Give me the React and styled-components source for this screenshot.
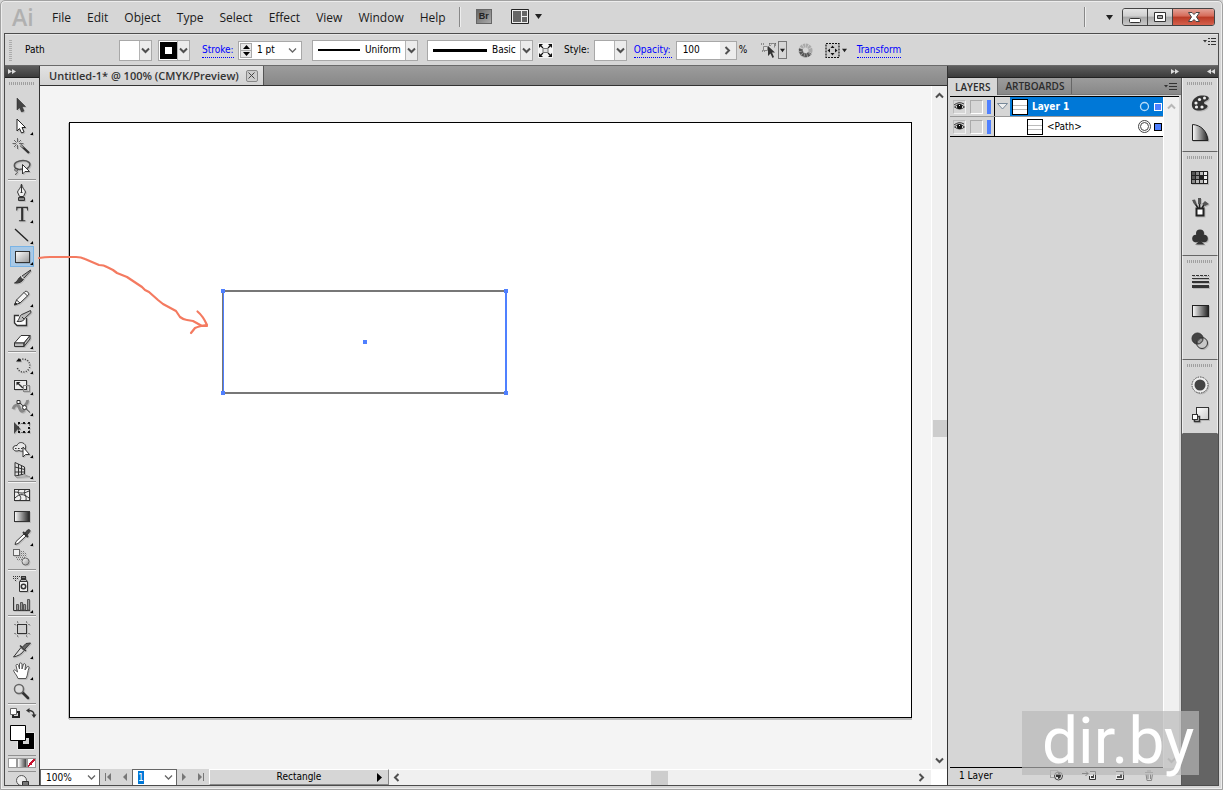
import React, { useState } from 'react'
import styled, { createGlobalStyle } from 'styled-components'

const GlobalStyle = createGlobalStyle`
  * {
    box-sizing: border-box;
  }
  body {
    margin: 0;
    overflow: hidden;
    background: #d6d6d6;
  }
  body, button, input, select {
    font-family: 'DejaVu Sans Condensed', 'Open Sans', sans-serif;
    font-size: 10px;
    line-height: 14px;
    color: #000;
  }
  button {
    padding: 0;
    border: 0;
    background: none;
  }
  svg {
    display: block;
    flex: none;
    overflow: visible;
  }
`

const menus = ['File', 'Edit', 'Object', 'Type', 'Select', 'Effect', 'View', 'Window', 'Help']

const dark = { fill: 'none', stroke: '#333', strokeWidth: 1 }

const toolIcons = {
  selection: <path d='M5 3V15L7.5 12.5L9.5 17L12 16L10 11.5H13.5Z' fill='#444' stroke='#222' strokeWidth='.5' />,
  direct: <path d='M5 3V15L7.5 12.5L9.5 17L12 16L10 11.5H13.5Z' fill='#fff' stroke='#222' />,
  wand: (
    <g {...dark}>
      <path d='M5.5 1V5M5.5 8V12M.5 6.5H4M7 6.5H11.5M2 3L4.5 5.5M9 3L7 5M2 10L4.5 7.5' stroke='#666' />
      <path d='M8.5 8L17 16' strokeWidth='2.4' />
      <path d='M8.5 8L11 10.5' stroke='#fff' />
    </g>
  ),
  lasso: (
    <g {...dark}>
      <path
        d='M10 11C7 12 3 11 2.5 8.500C1.500 5 6 2.500 11 2.500C16 2.500 19 5 17.500 8C17 9 16 10 15 10.500'
        strokeWidth='1.5'
        stroke='#555'
      />
      <path d='M4 10.500C2 11 2.500 13.500 4.500 13C7 12.500 6 10 4 10.500M5 13.500C6 15 4.500 16 3 16.500' stroke='#444' />
      <path d='M10.5 6.5V16L13 13.5H17.5Z' fill='#fff' />
    </g>
  ),
  pen: (
    <g {...dark}>
      <path d='M9.5 1C10 5 13 7 13.5 9L11.5 13.5H7.5L5.5 9C6 7 9 5 9.5 1Z' fill='#eee' />
      <path d='M9.5 2V9M8.5 9.5H10.5' />
      <path d='M6.5 14.5H12.5V17.5H6.5Z' fill='#888' />
    </g>
  ),
  type: (
    <text x='4' y='17' fontFamily='Liberation Serif' fontSize='20' fill='#333' stroke='#333' strokeWidth='.3'>
      T
    </text>
  ),
  line: <path d='M3 4L16 16' stroke='#222' strokeWidth='1.3' />,
  rect: <rect x='3.5' y='5.5' width='14' height='11' fill='url(#shine)' stroke='#333' />,
  brush: (
    <g {...dark}>
      <path d='M18.5 3L10 9L12 11L18.5 4Z' fill='#aaa' />
      <path d='M9 9.500L11.500 12C10 15 7 16.500 2.500 16C5.500 15 6 11 9 9.500Z' fill='#444' />
      <path d='M9.5 9.5L11.5 11.5' stroke='#eee' strokeWidth='1.5' />
    </g>
  ),
  pencil: (
    <g {...dark}>
      <path d='M2.5 17L4.5 12L13 3.5C15 2.5 17.5 5 16.5 7L8 15Z' fill='#f5f5f5' />
      <path d='M12 4.5L15.5 8M4.5 12L8 15' />
      <path d='M2.5 17L3.5 14.5L5 16Z' fill='#111' />
    </g>
  ),
  blob: (
    <g {...dark}>
      <path d='M7 6.5H2.5V14L5 16.5H14.5V9' fill='#fff' strokeWidth='1.4' />
      <path d='M18.5 1.5L11 5C7 6 8 10 5 12.500C9 13 12 12 13 9L19 3.500Z' fill='#bbb' />
      <path d='M10 8L12 10' />
    </g>
  ),
  eraser: (
    <g {...dark} strokeLinejoin='round'>
      <path d='M9 5.5H18L12 13H2.5Z' fill='#fff' />
      <path d='M2.5 13H12V16.5H2.5ZM12 13L18 5.5V9L12 16.5Z' fill='#bbb' />
    </g>
  ),
  rotate: (
    <g {...dark}>
      <path d='M8 5A6.500 6.500 0 1 1 5 12' strokeDasharray='1 1.5' strokeWidth='1.5' />
      <path d='M4 6.5L7 3L9.5 6.5Z' fill='#111' stroke='none' />
    </g>
  ),
  scale: (
    <g {...dark}>
      <rect x='2.5' y='4.5' width='12' height='9' fill='#eee' />
      <path d='M5 6.5L11 12' strokeWidth='1.5' />
      <path d='M4.5 6H8.5L4.5 9.5Z' fill='#222' stroke='none' />
      <rect x='11.5' y='9.5' width='6' height='6' stroke='#888' />
    </g>
  ),
  warp: (
    <g {...dark}>
      <path d='M1 12C3 7 6 7 7.500 11C9 15.500 12 15 12 11C12 7 16 8 15.500 3' strokeWidth='3' stroke='#888' />
      <path d='M6.5 4.5L18 15.5' />
      <path d='M5 3.5H8V6.5H5Z' fill='#fff' />
      <circle cx='12.5' cy='10.5' r='2' fill='#fff' />
    </g>
  ),
  transform: (
    <g {...dark}>
      <path d='M2 4V16L5.5 11.5H9Z' fill='#444' stroke='none' />
      <rect x='6.5' y='5.5' width='11' height='9' strokeDasharray='1 2' stroke='#111' />
      <path
        d='M6 4H8V6H6ZM11 4H13V6H11ZM16 4H18V6H16ZM16 9H18V11H16ZM6 13H8V15H6ZM11 13H13V15H11ZM16 13H18V15H16Z'
        fill='#111'
        stroke='none'
      />
    </g>
  ),
  builder: (
    <g {...dark}>
      <path d='M7 11.5C0 14 -1 6 5 6.5C7 1 15 4 13.5 9C13 12 10 13 7 11.5Z' fill='#e8e8e8' />
      <path d='M3 9.500H11' strokeDasharray='1.5 1.5' />
      <path d='M11 8V18L13.5 15.5H17.5Z' fill='#fff' />
    </g>
  ),
  perspective: (
    <g {...dark}>
      <path d='M3 2.5L12.5 7V14L3 16Z' fill='#ddd' />
      <path d='M6.500 4V15.500M9.500 5.500V15M3 7L12.500 9.500M3 12H12.500' />
      <path d='M4 17.5L18 16.500M11 14L18 17' stroke='#999' />
    </g>
  ),
  mesh: (
    <g {...dark}>
      <rect x='2.5' y='4.5' width='15' height='11' fill='#eee' />
      <path d='M3 7C8 7 9 10 17 6M3 13C8 8 12 9 17 13M7 5C4 9 11 11 8 15M13 5C11 9 15 11 14 15' />
    </g>
  ),
  gradient: <rect x='2.5' y='5.5' width='15' height='10' fill='url(#ramp)' stroke='#333' />,
  eyedropper: (
    <g {...dark}>
      <path d='M12 7L4 14.5L3 17.5L6 16.5L14 9Z' fill='#fff' />
      <path d='M11 5L16 10' strokeWidth='2' />
      <path d='M13 6L15.500 3C17 1.500 19 3.500 17.500 5L15 8Z' fill='#444' />
    </g>
  ),
  blend: (
    <g {...dark}>
      <rect x='1.5' y='1.5' width='6' height='6' fill='#eee' stroke='#666' />
      <path d='M9 3.5H12M9 5.5H14M9 7.5H15M4 9.5H13M5 11.5H10' strokeDasharray='1 1' stroke='#777' />
      <circle cx='13.5' cy='13.5' r='3.5' fill='url(#shine)' stroke='#666' />
    </g>
  ),
  spray: (
    <g {...dark}>
      <path d='M1 3.5H8M1 5.5H7M3 7.5H5' strokeDasharray='1 1' strokeWidth='1.2' />
      <path d='M7.5 8.5H15.5V18.5H7.5Z' fill='#eee' />
      <rect x='9.5' y='3.5' width='4' height='2' fill='#777' />
      <path d='M8 8L9 6.5H14L15 8' fill='#bbb' />
      <circle cx='11.5' cy='13.5' r='2.2' strokeWidth='1.5' />
    </g>
  ),
  graph: (
    <g {...dark}>
      <path d='M1.5 3V16.5H18' />
      <path d='M4.5 10.5H6.5V16H4.5ZM8.5 8.5H10.5V16H8.5ZM11.500 10.500H13.500V16H11.500ZM15.5 5.5H17.5V16H15.5Z' fill='#999' stroke='#555' />
    </g>
  ),
  artboard: (
    <g {...dark}>
      <rect x='5.5' y='5.5' width='9' height='9' fill='#d0d0d0' />
      <path
        d='M5.5 2V4M14.5 2V4M5.5 16V18M14.5 16V18M2 5.5H4M2 14.5H4M16 5.5H18M16 14.5H18'
        stroke='#888'
      />
    </g>
  ),
  slice: (
    <g {...dark}>
      <path d='M1.5 17L9 7.5L12 10.5C10 14 6 16 1.5 17Z' fill='#ddd' />
      <path d='M8 5.5L14 11' strokeWidth='1.5' />
      <path d='M10.5 7L14 3.5L18.5 3L12.5 9.5' fill='#666' />
    </g>
  ),
  hand: (
    <path
      d='M6 17.5C5 14 1.5 11 1.5 9.5C2 8 4 9.5 5.5 11L4 4.5C4 3 6 3 6.5 4.5L7.5 8V3C7.5 1.5 9.5 1.5 10 3V8L11.5 3C12 2 13.5 2.5 13.5 4L13 9L15 6C16 4.5 17.5 5.5 17 7C15.5 10 16 14 14 17.5Z'
      fill='#fff'
      stroke='#555'
    />
  ),
  zoom: (
    <g {...dark}>
      <path d='M10.5 10.5L16 16' strokeWidth='2.6' strokeLinecap='round' />
      <circle cx='7' cy='7' r='4.5' fill='#ddd' stroke='#666' strokeWidth='1.5' />
    </g>
  ),
}

// a trailing + marks a tool that hides more tools behind it
const toolGroups = [
  ['selection', 'direct+', 'wand', 'lasso'],
  ['pen+', 'type+', 'line+', 'rect+', 'brush', 'pencil+', 'blob', 'eraser+'],
  ['rotate+', 'scale+', 'warp+', 'transform', 'builder+', 'perspective+'],
  ['mesh', 'gradient', 'eyedropper+', 'blend'],
  ['spray+', 'graph+'],
  ['artboard', 'slice+', 'hand+', 'zoom'],
]

const dockIcons = {
  color: (
    <g>
      <path d='M2 13C1 7 6 3 11 2.5C15 2 20 3 18.500 6C17.500 8 14 8 14 10C14 12 18 11 17.500 13.500C16 18 3 20 2 13Z' fill='#333' />
      <g fill='#eee'>
        <circle cx='6' cy='10' r='1.600' />
        <circle cx='9.500' cy='6.500' r='1.600' />
        <circle cx='14.500' cy='5' r='1.500' />
        <circle cx='6.500' cy='14' r='1.600' />
        <circle cx='12' cy='14' r='1.600' />
      </g>
    </g>
  ),
  guide: <path d='M2.5 1.5C11 2 17 8 18 17.5H2.5Z' fill='url(#ramp)' stroke='#222' />,
  swatches: (
    <g>
      <path d='M1 4H18V17H1Z' fill='#222' />
      <path d='M2 5H5V8H2ZM2 9H5V12H2Z' fill='#555' />
      <path d='M6 5H9V8H6ZM6 9H9V12H6ZM2 13H5V16H2Z' fill='#888' />
      <path d='M10 5H13V8H10ZM10 13H13V16H10ZM6 13H9V16H6Z' fill='#bbb' />
      <path d='M14 5H17V8H14ZM14 9H17V12H14ZM14 13H17V16H14Z' fill='#eee' />
    </g>
  ),
  brushes: (
    <g fill='none' stroke='#222'>
      <path d='M4 5L8 11M9.5 2V11M12 11L15 6' strokeWidth='1.5' />
      <path d='M2 3L5 2.5L7 8L4 7ZM8 1H11V7H8ZM12 7L15 4L19 7L15 9Z' fill='#555' stroke='none' />
      <rect x='6.5' y='11.5' width='7' height='7' fill='#fff' strokeWidth='2' />
    </g>
  ),
  symbols: (
    <g fill='#333'>
      <circle cx='10' cy='6.5' r='4' />
      <circle cx='6' cy='11.5' r='3.800' />
      <circle cx='14' cy='11.5' r='3.800' />
      <path d='M9 10H11C11 14 12 16 15 17.5H5C8 16 9 14 9 10Z' />
    </g>
  ),
  stroke: (
    <g fill='#333'>
      <path d='M2 4.500H19' stroke='#333' strokeDasharray='3 1' />
      <path d='M2 7H19V8H2ZM2 10H19V12H2ZM2 14H19V17H2Z' />
    </g>
  ),
  gradient: <rect x='2.5' y='4.5' width='16' height='11' fill='url(#ramp)' stroke='#222' />,
  transparency: (
    <g stroke='#333'>
      <circle cx='7.5' cy='7.5' r='5.5' fill='#444' />
      <circle cx='12' cy='12' r='5.5' fill='#ccc' fillOpacity='.75' />
      <path d='M13 7A5.5 5.5 0 0 1 7 13A5.5 5.5 0 0 1 13 7Z' fill='#999' />
    </g>
  ),
  appearance: (
    <g>
      <circle cx='10' cy='10' r='8' fill='#eee' stroke='#444' strokeDasharray='1.5 1' />
      <circle cx='10' cy='10' r='5.500' fill='#444' />
    </g>
  ),
  styles: (
    <g stroke='#333'>
      <rect x='6.5' y='2.5' width='12' height='12' fill='url(#glass)' />
      <path d='M7 11.5H9.5V16.5H4.5V13' fill='#ccc' strokeWidth='1.5' />
      <rect x='2.5' y='9.5' width='5' height='5' fill='#fff' />
    </g>
  ),
}

const dockGroups = [
  ['color', 'guide'],
  ['swatches', 'brushes', 'symbols'],
  ['stroke', 'gradient', 'transparency'],
  ['appearance', 'styles'],
]

const Chevron = ({ dir = 'down', thin }) => {
  const turn = { down: 0, left: 90, up: 180, right: 270 }[dir]
  return (
    <svg width='9' height='9' viewBox='0 0 9 9'>
      <path
        d='M1 2.5L4.5 6L8 2.5'
        transform={`rotate(${turn} 4.5 4.5)`}
        fill='none'
        stroke={thin ? '#666' : '#505050'}
        strokeWidth={thin ? 1.3 : 2}
      />
    </svg>
  )
}

const Caret = ({ size = 7 }) => (
  <svg width={size} height='5' viewBox='0 0 7 5'>
    <path d='M0 0H7L3.5 5Z' fill='#222' />
  </svg>
)

const Dropdown = ({ label, value, width, line, thin, swatch }) => (
  <SelectBox $width={width} $plain={thin}>
    {swatch && <BlackSwatch />}
    {line && <StrokeLine $weight={line} />}
    <Select aria-label={label} defaultValue={value}>
      <option>{value}</option>
    </Select>
    <Arrow $plain={thin}>
      <Chevron thin={thin} />
    </Arrow>
  </SelectBox>
)

const Defs = () => (
  <Hidden width='0' height='0' aria-hidden='true'>
    <defs>
      <linearGradient id='shine' x2='1' y2='1'>
        <stop stopColor='#fff' />
        <stop offset='1' stopColor='#999' />
      </linearGradient>
      <linearGradient id='glass' x2='1' y2='1'>
        <stop stopColor='#fff' />
        <stop offset='1' stopColor='#ccc' />
      </linearGradient>
      <linearGradient id='ramp'>
        <stop stopColor='#fff' />
        <stop offset='1' stopColor='#222' />
      </linearGradient>
    </defs>
  </Hidden>
)

const MenuBar = () => (
  <TopBar>
    <Logo>Ai</Logo>
    <Menu>
      {menus.map((name) => (
        <MenuButton key={name}>{name}</MenuButton>
      ))}
    </Menu>
    <Divider />
    <Bridge aria-label='Bridge'>Br</Bridge>
    <ArrangeButton aria-label='Arrange documents'>
      <svg width='18' height='15' viewBox='0 0 18 15'>
        <path d='M.5 .5H17.5V14.5H.5Z' fill='#eee' stroke='#222' />
        <path d='M2 2H10V13H2ZM11 2H16V7H11ZM11 8H16V13H11Z' fill='#666' />
      </svg>
      <Caret />
    </ArrangeButton>
    <TopRight>
      <Divider />
      <button aria-label='Workspace'>
        <Caret />
      </button>
      <WindowButtons>
        <WindowButton aria-label='Minimize'>
          <svg width='12' height='12' viewBox='0 0 12 12'>
            <rect x='.5' y='7.5' width='11' height='4' rx='1' fill='#fff' stroke='#333' />
          </svg>
        </WindowButton>
        <WindowButton aria-label='Restore'>
          <svg width='12' height='10' viewBox='0 0 12 10'>
            <path d='M.5 .5H11.5V9.5H.5Z' fill='#fff' stroke='#333' />
            <path d='M3.5 3.5H8.5V6.5H3.5Z' fill='#aaa' stroke='#333' />
          </svg>
        </WindowButton>
        <WindowButton aria-label='Close' $close>
          <svg width='12' height='10' viewBox='0 0 12 10'>
            <path
              d='M.5 .5H4L6 2.5L8 .5H11.5L8.5 5L11.5 9.5H8L6 7.5L4 9.5H.5L3.5 5Z'
              fill='#fff'
              stroke='#444'
            />
          </svg>
        </WindowButton>
      </WindowButtons>
    </TopRight>
  </TopBar>
)

const ControlBar = () => (
  <Controls>
    <GripV />
    <Target>Path</Target>
    <ControlGroup $gap='6px' $after='12px'>
      <Dropdown label='Fill' width='33px' value='' />
      <Dropdown label='Stroke color' width='32px' value='' swatch />
    </ControlGroup>
    <ControlGroup $gap='4px' $after='10px'>
      <TextLink href='#stroke' $width='32px'>Stroke:</TextLink>
      <NumberBox $width='64px'>
        <Stepper>
          <button aria-label='Increase stroke'>
            <svg width='7' height='4' viewBox='0 0 7 4'><path d='M0 4H7L3.5 0Z' /></svg>
          </button>
          <button aria-label='Decrease stroke'>
            <svg width='7' height='4' viewBox='0 0 7 4'><path d='M0 0H7L3.5 4Z' /></svg>
          </button>
        </Stepper>
        <input aria-label='Stroke weight' defaultValue='1 pt' />
        <Chevron thin />
      </NumberBox>
    </ControlGroup>
    <ControlGroup $gap='9px' $after='5px'>
      <Dropdown label='Width profile' width='106px' value='Uniform' line='2px' />
      <Dropdown label='Brush' width='106px' value='Basic' line='3px' />
    </ControlGroup>
    <ControlGroup $gap='11px' $after='7px'>
      <button aria-label='Recolor'>
        <svg width='15' height='15' viewBox='0 0 15 15'>
          <path d='M0 0H15V15H0Z' fill='#f4f4f4' />
          <path d='M2 2L5 5M13 2L10 5M2 13L5 10M13 13L10 10' stroke='#111' strokeWidth='1.2' />
          <path d='M1 1H5L1 5ZM14 1V5L10 1ZM1 14V10L5 14ZM14 14H10L14 10Z' fill='#111' />
          <path d='M5 5.5H10V9.5H5Z' fill='#ddd' stroke='#777' />
        </svg>
      </button>
      <ControlGroup $gap='4px'>
        <Caption>Style:</Caption>
        <Dropdown label='Graphic style' width='33px' value='' />
      </ControlGroup>
    </ControlGroup>
    <ControlGroup $gap='4px' $after='12px'>
      <TextLink href='#opacity' $width='38px'>Opacity:</TextLink>
      <NumberBox $width='61px'>
        <input aria-label='Opacity' defaultValue='100' />
        <OpacityButton aria-label='Opacity slider'>
          <Chevron dir='right' />
        </OpacityButton>
      </NumberBox>
      <Caption $narrow>%</Caption>
    </ControlGroup>
    <ControlGroup $gap='2px' $after='11px'>
      <button aria-label='Select similar'>
        <svg width='15' height='16' viewBox='0 0 15 16'>
          <path d='M0 2H3M8 2H15M1 9H5M9 1V4M14 1V4' stroke='#444' strokeDasharray='1 1' />
          <path d='M2.5 4.5H6.5V8.5H2.5ZM9.5 1.5H13.5V5.5' fill='#ddd' stroke='#888' />
          <path d='M7 4V14L9.5 11.5L11.5 16L13 15L11 10.5H14Z' fill='#333' />
        </svg>
      </button>
      <SmallDrop aria-label='Select similar options'>
        <Caret size={5} />
      </SmallDrop>
    </ControlGroup>
    <ControlGroup $gap='12px' $after='10px'>
      <button aria-label='Recolor artwork'>
        <svg width='15' height='15' viewBox='0 0 15 15'>
          <circle cx='7.5' cy='7.5' r='5' fill='none' stroke='#aaa' strokeWidth='4' strokeDasharray='2 .6' />
          <path
            d='M3 6A5 5 0 0 0 12 10'
            fill='none'
            stroke='#555'
            strokeWidth='4'
            strokeDasharray='2 .6'
          />
        </svg>
      </button>
      <AlignButton aria-label='Align to'>
        <svg width='15' height='15' viewBox='0 0 15 15'>
          <path d='M1 .5H14V14.5H1Z' fill='#ccc' stroke='#111' strokeWidth='1.2' strokeDasharray='2 1' />
          <path d='M7.5 2.5L9.5 5H5.5ZM7.5 12.5L9.5 10H5.5ZM2.5 7.5L5 5.5V9.5ZM12.5 7.5L10 5.5V9.5Z' fill='#111' />
        </svg>
        <Caret size={5} />
      </AlignButton>
    </ControlGroup>
    <TextLink href='#transform'>Transform</TextLink>
    <BarMenu aria-label='Control bar menu'>
      <PanelMenuIcon dotted />
    </BarMenu>
  </Controls>
)

const PanelMenuIcon = ({ dotted }) => (
  <svg width='13' height='9' viewBox='0 0 13 9'>
    <path d='M0 3H4L2 5.5Z' fill='#333' />
    <path d='M5 1.5H13M5 4.5H13M5 7.5H13' stroke='#333' strokeDasharray={dotted ? '2 1 9' : 'none'} />
  </svg>
)

const ToolBox = () => {
  const [active, setActive] = useState('rect')
  return (
    <Tools>
      <DarkStrip>
        <Double />
      </DarkStrip>
      <ToolBody>
        <GripH $tall />
        {toolGroups.map((group) => (
          <ToolGroup key={group[0]}>
            {group.map((item) => {
              const name = item.replace('+', '')
              return (
                <Tool
                  key={name}
                  aria-label={name}
                  aria-pressed={active === name}
                  $active={active === name}
                  onClick={() => setActive(name)}
                >
                  <svg width='22' height='19' viewBox='-1 1 22 19'>
                    {toolIcons[name]}
                    {item !== name && <path d='M21 16V19H18Z' fill='#000' />}
                  </svg>
                </Tool>
              )
            })}
          </ToolGroup>
        ))}
        <SwatchButton aria-label='Fill and stroke'>
          <svg width='30' height='48' viewBox='0 0 30 48'>
            <path d='M6 5H10V10H4V8' fill='none' stroke='#222' strokeWidth='2' />
            <path d='M1.5 1.5H7.5V7.5H1.5Z' fill='#fff' stroke='#666' />
            <path d='M19 3.5C24 3.5 25 5 25 8' fill='none' stroke='#333' strokeWidth='1.5' />
            <path d='M17 3.5L20.5 1V6ZM25 11L22.5 7.5H27.5Z' fill='#333' />
            <path d='M8.500 25.500H25.500V42.500H8.500Z' fill='#fff' />
            <path d='M9 26H25V42H9ZM14 31V37H20V31Z' fill='#000' fillRule='evenodd' />
            <path d='M14 31H20V37H14Z' fill='#d6d6d6' />
            <path d='M1.5 18.5H16.5V33.5H1.5Z' fill='#fff' stroke='#000' />
          </svg>
        </SwatchButton>
        <ColorModes>
          <ColorMode aria-label='Color' $fill='#fff' />
          <ColorMode aria-label='Gradient' $fill='linear-gradient(90deg, #fff, #444)' />
          <ColorMode aria-label='None' $fill='linear-gradient(135deg, #fff 40%, #c8102e 40% 60%, #fff 60%)' />
        </ColorModes>
        <ScreenMode aria-label='Screen mode'>
          <svg width='14' height='12' viewBox='0 0 14 12'>
            <circle cx='5.5' cy='5.5' r='5' fill='#eee' stroke='#555' />
            <path d='M6.5 6.5H12.5V11.5H6.5Z' fill='#777' stroke='#333' />
          </svg>
        </ScreenMode>
      </ToolBody>
    </Tools>
  )
}

const Double = ({ left }) => (
  <svg width='8' height='5' viewBox='0 0 8 5'>
    <path d={left ? 'M4 0V5L0 2.5ZM8 0V5L4 2.5Z' : 'M0 0V5L4 2.5ZM4 0V5L8 2.5Z'} fill='#ddd' />
  </svg>
)

const Step = ({ left, end }) => (
  <svg width='8' height='8' viewBox='0 0 8 8'>
    <g transform={left ? 'rotate(180 4 4)' : undefined} fill='#777'>
      <path d='M1 0V8L5 4Z' />
      {end && <path d='M6 0H7V8H6Z' />}
    </g>
  </svg>
)

const Document = () => (
  <Main>
    <TabStrip>
      <DocTab>
        Untitled-1* @ 100% (CMYK/Preview)
        <CloseTab aria-label='Close document'>
          <svg width='7' height='7' viewBox='0 0 7 7'>
            <path d='M.5 .5L6.5 6.5M6.5 .5L.5 6.5' stroke='#444' />
          </svg>
        </CloseTab>
      </DocTab>
    </TabStrip>
    <Stage>
      <Pasteboard>
        <Artboard>
          <Drawn width='288' height='106' viewBox='0 0 288 106'>
            <path d='M285 2H2V104H285' fill='none' stroke='#777' strokeWidth='2' />
            <path d='M2.5 2V104' stroke='#4f80ff' />
            <path d='M285 2V104' stroke='#4f80ff' strokeWidth='2' />
            <path
              d='M0 0H4V4H0ZM283 0H287V4H283ZM0 102H4V106H0ZM283 102H287V106H283ZM142 51H146V55H142Z'
              fill='#4f80ff'
            />
          </Drawn>
          <Sketch width='172' height='80' viewBox='38 254 172 80'>
            <path d='M39 258Q45 257 50 257H76Q81 257 85 259L99 265Q104 265 107 267L113 270L117 273L127 277L142 287L145 290L149 292L158 300L163 304L176 311L180 317Q184 320 187 320L193 321L202 326H207' />
            <path d='M197.5 311.5Q203 316 207 325Q199 326 195 328L191 333' />
          </Sketch>
        </Artboard>
      </Pasteboard>
      <ScrollV>
        <button aria-label='Scroll up'><Chevron dir='up' /></button>
        <ThumbV />
        <button aria-label='Scroll down'><Chevron /></button>
      </ScrollV>
    </Stage>
    <StatusBar>
      <StatusSelect $width='60px'>
        <Select aria-label='Zoom' defaultValue='100%'>
          <option>100%</option>
        </Select>
        <Arrow $plain><Chevron thin /></Arrow>
      </StatusSelect>
      <Pager>
        <button aria-label='First artboard'><Step left end /></button>
        <button aria-label='Previous artboard'><Step left /></button>
      </Pager>
      <StatusSelect $width='45px' $marked>
        <Select aria-label='Artboard' defaultValue='1'>
          <option>1</option>
        </Select>
        <Arrow $plain><Chevron thin /></Arrow>
      </StatusSelect>
      <Pager>
        <button aria-label='Next artboard'><Step /></button>
        <button aria-label='Last artboard'><Step end /></button>
      </Pager>
      <ToolStatus>
        <span>Rectangle</span>
        <svg width='5' height='9' viewBox='0 0 5 9'><path d='M0 0V9L5 4.5Z' /></svg>
      </ToolStatus>
      <ScrollH>
        <button aria-label='Scroll left'><Chevron dir='left' /></button>
        <ThumbH />
        <button aria-label='Scroll right'><Chevron dir='right' /></button>
      </ScrollH>
      <Corner />
    </StatusBar>
  </Main>
)

const LayerRow = ({ name, top }) => (
  <Layer>
    <LayerFlags>
      <EyeButton aria-label={`Hide ${name}`}>
        <svg width='11' height='9' viewBox='0 0 11 9'>
          <path d='M.5 5Q5 0 10.5 5Q6 9 .5 5Z' fill='#eee' stroke='#333' />
          <path d='M0 3Q5 -1 10 2' fill='none' stroke='#333' />
          <circle cx='5.5' cy='4.5' r='2.6' fill='#111' />
          <path d='M5 3H6V4H5Z' fill='#fff' />
        </svg>
      </EyeButton>
      <LockBox aria-label={`Lock ${name}`} />
      <LayerColor />
    </LayerFlags>
    {top && (
      <Expander aria-label='Collapse'>
        <svg width='11' height='7' viewBox='0 0 11 7'>
          <path d='M.5 .5H10.5L5.5 6Z' fill='#eee' stroke='#789' />
        </svg>
      </Expander>
    )}
    <LayerName $top={top}>
      <Thumb />
      <LayerText>{name}</LayerText>
      <svg width='13' height='13' viewBox='0 0 13 13'>
        {top ? (
          <circle cx='6.5' cy='6.5' r='4' fill='none' stroke='#b8dcf8' strokeWidth='1.3' />
        ) : (
          <g fill='#fff' stroke='#444'>
            <circle cx='6.5' cy='6.5' r='6' />
            <circle cx='6.5' cy='6.5' r='4' />
          </g>
        )}
      </svg>
      <Selected $top={top} />
    </LayerName>
  </Layer>
)

const LayersPanel = () => (
  <Panel>
    <PanelTabs>
      <PanelTab $on>LAYERS</PanelTab>
      <PanelTab>ARTBOARDS</PanelTab>
      <PanelMenu aria-label='Panel menu'><PanelMenuIcon /></PanelMenu>
    </PanelTabs>
    <PanelBody>
      <LayerList>
        <LayerRow name='Layer 1' top />
        <LayerRow name='<Path>' />
      </LayerList>
      <PanelScroll>
        <Chevron dir='up' />
        <Chevron />
      </PanelScroll>
    </PanelBody>
    <PanelFoot>
      <span>1 Layer</span>
      <FootIcons>
        <button aria-label='Clipping mask'>
          <svg width='13' height='11' viewBox='0 0 13 11'>
            <path d='M.5 .5H7.5V7.5H.5Z' fill='none' stroke='#666' strokeDasharray='1 1' />
            <circle cx='8.5' cy='6' r='4' fill='#ddd' stroke='#444' />
            <path d='M6 4H8V2C12 3 12 8 8 9V7H6Z' fill='#333' />
          </svg>
        </button>
        <button aria-label='New sublayer'>
          <svg width='14' height='11' viewBox='0 0 14 11'>
            <path d='M0 3.5H6M4 1.5L6 3.5L4 5.5' fill='none' stroke='#222' />
            <path d='M8 1.5H13.5V9.5H7.5V6' fill='#eee' stroke='#333' />
            <path d='M9 8V6H11V4H12V8Z' fill='#444' />
          </svg>
        </button>
        <button aria-label='New layer'>
          <svg width='10' height='11' viewBox='0 0 10 11'>
            <path d='M1 1.5H8.5V9.5H1' fill='#eee' stroke='#444' />
            <path d='M2 8V6H5V4H7V8Z' fill='#555' />
          </svg>
        </button>
        <button aria-label='Delete'>
          <svg width='10' height='11' viewBox='0 0 10 11'>
            <path d='M1 2.5H9M3 1H7M2 4L3 10.5H7.5L8.5 4M4 4V9M6.5 4V9' fill='none' stroke='#888' />
          </svg>
        </button>
      </FootIcons>
    </PanelFoot>
  </Panel>
)

const Dock = () => (
  <DockColumn>
    {dockGroups.map((group) => (
      <DockGroup key={group[0]}>
        <GripH />
        {group.map((name) => (
          <DockButton key={name} aria-label={name}>
            <svg width='20' height='20' viewBox='0 0 20 20'>{dockIcons[name]}</svg>
          </DockButton>
        ))}
      </DockGroup>
    ))}
  </DockColumn>
)

const App = () => (
  <Window>
    <GlobalStyle />
    <Defs />
    <MenuBar />
    <Frame>
      <ControlBar />
      <Workspace>
        <ToolBox />
        <Document />
        <Side>
          <DarkStrip $end>
            <Double />
            <Double left />
          </DarkStrip>
          <SideBody>
            <LayersPanel />
            <Dock />
          </SideBody>
        </Side>
      </Workspace>
    </Frame>
    <Watermark>dir.by</Watermark>
  </Window>
)

const Window = styled.div`
  display: flex;
  flex-direction: column;
  height: 100vh;
  padding: 0 3px 3px;
  border: 1px solid #a2a2a2;
  border-radius: 5px 5px 0 0;
  background: #d6d6d6;
  box-shadow: inset 0 0 0 1px #ededed;
  position: relative;
`

const Hidden = styled.svg`
  height: 0;
`

const TopBar = styled.header`
  display: flex;
  align-items: center;
  height: 32px;
  flex: none;
  padding: 0 4px 0 8px;
`

const Logo = styled.span`
  width: 33px;
  font: 600 23px/28px 'Open Sans', sans-serif;
  color: #b0b0b0;
`

const Menu = styled.nav`
  display: flex;
  gap: 16px;
  margin: 2px 13px 0 7px;
`

const MenuButton = styled.button`
  font: 12px/18px 'Open Sans', sans-serif;
  color: #1a1a1a;
`

const Divider = styled.span`
  width: 2px;
  height: 20px;
  border-left: 1px solid #888;
  border-right: 1px solid #eee;
`

const Bridge = styled.button`
  width: 16px;
  height: 15px;
  margin: 0 19px 2px 15px;
  background: linear-gradient(135deg, #666, #aaa);
  border: 1px solid #666;
  font: bold 9px/13px 'Liberation Sans', sans-serif;
  color: #222;
`

const ArrangeButton = styled.button`
  display: flex;
  align-items: center;
  gap: 6px;
  margin-bottom: 2px;
`

const TopRight = styled.div`
  display: flex;
  align-items: center;
  margin-left: auto;
  gap: 20px;

  button + div {
    margin-left: -11px;
  }
`

const WindowButtons = styled.div`
  display: flex;
  height: 18px;
  border: 1px solid #444;
  border-radius: 3px;
  overflow: hidden;
`

const WindowButton = styled.button`
  display: grid;
  place-items: center;
  width: ${(props) => (props.$close ? '41px' : '25px')};
  border-right: ${(props) => (props.$close ? 0 : '1px solid #444')};
  background: ${(props) =>
    props.$close
      ? 'linear-gradient(#e3a196, #d66a58 45%, #b93a25 50%, #d5604c)'
      : 'linear-gradient(#e4e4e4, #cfcfcf 45%, #a8a8a8 50%, #c8c8c8)'};
`

const Frame = styled.div`
  display: flex;
  flex-direction: column;
  flex: 1;
  min-height: 0;
  border: 1px solid #4c4c4c;
`

const Controls = styled.div`
  display: flex;
  align-items: center;
  flex: none;
  height: 32px;
  padding: 0 2px 0 4px;
  border-top: 1px solid #e6e6e6;
  border-bottom: 1px solid #6a6a6a;
  white-space: nowrap;
`

const ControlGroup = styled.div`
  display: flex;
  align-items: center;
  gap: ${(props) => props.$gap};
  margin-right: ${(props) => props.$after || 0};
`

const GripV = styled.span`
  width: 3px;
  height: 21px;
  background: repeating-linear-gradient(#999 0 1px, transparent 1px 2px);
  opacity: 0.7;
`

const GripH = styled.span`
  display: block;
  flex: none;
  height: 3px;
  margin: ${(props) => (props.$tall ? '4px 4px 10px' : '4px 4px 3px')};
  background: repeating-linear-gradient(90deg, #888 0 1px, transparent 1px 2px);
  opacity: 0.7;
`

const Target = styled.span`
  width: 94px;
  margin-left: 13px;
`

const Caption = styled.span`
  min-width: ${(props) => (props.$narrow ? '10px' : '25px')};
  margin-left: ${(props) => (props.$narrow ? '-2px' : 0)};
`

const TextLink = styled.a`
  min-width: ${(props) => props.$width || 'auto'};
  color: #00f;
  text-decoration: none;
  border-bottom: 1px dotted #00f;
`

const SelectBox = styled.div`
  display: flex;
  align-items: center;
  position: relative;
  width: ${(props) => props.$width};
  height: 21px;
  background: #fff;
  border: 1px solid #a8a8a8;
`

const Select = styled.select`
  appearance: none;
  flex: 1;
  min-width: 0;
  padding: 0;
  border: 0;
  background: none;
  outline: none;
`

const Arrow = styled.span`
  display: grid;
  place-items: center;
  flex: none;
  width: ${(props) => (props.$plain ? '16px' : '12px')};
  height: 100%;
  background: ${(props) => (props.$plain ? 'none' : '#ececec')};
  border-left: ${(props) => (props.$plain ? 0 : '1px solid #b4b4b4')};
  pointer-events: none;
`

const BlackSwatch = styled.span`
  flex: none;
  width: 17px;
  height: 17px;
  margin-left: 1px;
  border: 5px solid #000;
  background: #fff;
`

const StrokeLine = styled.span`
  flex: 1;
  height: ${(props) => props.$weight};
  margin: 0 5px;
  background: #000;

  & + select {
    flex: none;
    margin-right: 4px;
  }
`

const NumberBox = styled.div`
  display: flex;
  align-items: center;
  width: ${(props) => props.$width};
  height: 19px;
  padding: 1px 4px 1px 1px;
  border: 1px solid #a8a8a8;
  background: #fff;

  input {
    flex: 1;
    min-width: 0;
    padding: 0 0 0 5px;
    border: 0;
    outline: 0;
    background: none;
  }
`

const Stepper = styled.div`
  display: grid;
  width: 12px;
  height: 15px;
  border: 1px solid #aaa;
  background: #e8e8e8;

  button {
    display: grid;
    place-items: center;
  }
  button + button {
    border-top: 1px solid #aaa;
  }
`

const OpacityButton = styled.button`
  display: grid;
  place-items: center;
  width: 16px;
  height: 17px;
  margin-right: -4px;
  background: #ececec;
`

const SmallDrop = styled.button`
  display: grid;
  place-items: center;
  width: 9px;
  height: 18px;
  border: 1px solid #777;
`

const AlignButton = styled.button`
  display: flex;
  align-items: center;
  gap: 2px;
`

const BarMenu = styled.button`
  align-self: flex-start;
  margin: 2px 0 0 auto;
`

const Workspace = styled.div`
  display: flex;
  flex: 1;
  min-height: 0;
`

const DarkStrip = styled.div`
  display: flex;
  align-items: center;
  justify-content: ${(props) => (props.$end ? 'flex-end' : 'flex-start')};
  gap: 28px;
  flex: none;
  height: 12px;
  padding: 0 3px;
  background: linear-gradient(#5e5e5e, #3c3c3c);
  border-bottom: 1px solid #222;
`

const Tools = styled.aside`
  display: flex;
  flex-direction: column;
  flex: none;
  width: 35px;
  border-right: 1px solid #333;
`

const ToolBody = styled.div`
  display: flex;
  flex-direction: column;
  flex: 1;
  min-height: 0;
  overflow: hidden;
`

const ToolGroup = styled.div`
  display: flex;
  flex-direction: column;
  flex: none;
  margin: 0 3px 3px;
  padding-left: 2px;
  border-bottom: 1px solid #909090;
  box-shadow: 0 1px #f4f4f4;
`

const Tool = styled.button`
  width: 24px;
  height: 21px;
  border: 1px solid ${(props) => (props.$active ? '#7ab4e6' : 'transparent')};
  background: ${(props) => (props.$active ? '#a9c9e6' : 'none')};

  svg {
    filter: drop-shadow(1px 1px 0 rgba(0, 0, 0, 0.12));
  }
`

const SwatchButton = styled.button`
  flex: none;
  height: 48px;
  padding-left: 4px;
`

const ColorModes = styled.div`
  display: flex;
  flex: none;
  margin: 0 3px;
  padding: 2px 0 3px;
  border-top: 1px solid #909090;
  border-bottom: 1px solid #909090;
`

const ColorMode = styled.button`
  flex: 1;
  height: 10px;
  border: 1px solid #999;
  background: ${(props) => props.$fill};
`

const ScreenMode = styled.button`
  padding: 3px 0 0 11px;
`

const Main = styled.main`
  display: flex;
  flex-direction: column;
  flex: 1;
  min-width: 0;
`

const TabStrip = styled.div`
  display: flex;
  flex: none;
  height: 20px;
  background: linear-gradient(#9c9c9c, #888);
  border-bottom: 1px solid #333;
`

const DocTab = styled.div`
  display: flex;
  align-items: center;
  gap: 7px;
  padding: 0 5px 0 9px;
  border-right: 1px solid #555;
  background: linear-gradient(#e2e2e2, #d2d2d2);
  font: 600 11px/18px 'Open Sans', sans-serif;
  color: #333;
`

const CloseTab = styled.button`
  display: grid;
  place-items: center;
  width: 12px;
  height: 12px;
  border: 1px solid #888;
  border-radius: 2px;
  background: #ccc;
`

const Stage = styled.div`
  display: flex;
  flex: 1;
  min-height: 0;
`

const Pasteboard = styled.div`
  display: flex;
  flex: 1;
  padding: 36px 19px 51px 29px;
  background: #f4f4f4;
`

const Artboard = styled.section`
  position: relative;
  flex: 1;
  border: 1px solid #000;
  background: #fff;
  box-shadow: 0 2px #bbb, -1px 1px #bbb;
`

const Drawn = styled.svg`
  position: absolute;
  left: 151px;
  top: 166px;
`

const Sketch = styled.svg`
  position: absolute;
  left: -32px;
  top: 131px;
  fill: none;
  stroke: #f47a60;
  stroke-width: 2.2;
  stroke-linejoin: round;
  stroke-linecap: round;
`

const ScrollV = styled.div`
  display: flex;
  flex-direction: column;
  justify-content: space-between;
  align-items: center;
  width: 16px;
  padding: 5px 0 4px;
  border-left: 1px solid #fff;
  background: #f0f0f0;
`

const ThumbV = styled.span`
  width: 14px;
  height: 17px;
  background: #cdcdcd;
`

const StatusBar = styled.div`
  display: flex;
  flex: none;
  height: 16px;
`

const StatusSelect = styled.div`
  display: flex;
  align-items: center;
  width: ${(props) => props.$width};
  padding-left: 5px;
  border: 1px solid #666;
  border-bottom: 0;
  background: #fff;

  select {
    flex: ${(props) => (props.$marked ? 'none' : 1)};
    background: ${(props) => (props.$marked ? '#0078d7' : 'none')};
    color: ${(props) => (props.$marked ? '#fff' : '#000')};
    height: 13px;
    line-height: 13px;
  }
  span {
    margin-left: auto;
  }
`

const Pager = styled.div`
  display: flex;
  align-items: center;
  justify-content: space-around;
  width: 32px;
`

const ToolStatus = styled.button`
  display: flex;
  align-items: center;
  width: 180px;
  padding: 0 6px 0 11px;
  border: 1px solid #fff;
  border-right: 1px solid #888;
  border-bottom: 1px solid #888;

  span {
    flex: 1;
  }
`

const ScrollH = styled.div`
  display: flex;
  flex: 1;
  align-items: center;
  justify-content: space-between;
  padding: 0 5px 0 3px;
  border-top: 1px solid #fff;
  background: #f0f0f0;
`

const ThumbH = styled.span`
  width: 17px;
  height: 14px;
  background: #cdcdcd;
`

const Corner = styled.span`
  width: 16px;
  background: #fff;
`

const Side = styled.aside`
  display: flex;
  flex-direction: column;
  flex: none;
  width: 271px;
  border-left: 1px solid #333;
`

const SideBody = styled.div`
  display: flex;
  flex: 1;
  min-height: 0;
`

const Panel = styled.section`
  display: flex;
  flex-direction: column;
  flex: 1;
  min-width: 0;
  border-right: 1px solid #5a5a5a;
`

const PanelTabs = styled.div`
  display: flex;
  flex: none;
  height: 17px;
  background: linear-gradient(#9c9c9c, #888);
  border-bottom: 1px solid #777;
`

const PanelTab = styled.button`
  height: ${(props) => (props.$on ? '17px' : '16px')};
  padding: 0 7px;
  border-right: 1px solid #666;
  background: ${(props) => (props.$on ? '#d6d6d6' : 'none')};
  font: 600 10px/16px 'Open Sans', sans-serif;
  color: #2c2c2c;
`

const PanelMenu = styled.button`
  margin: 0 4px 0 auto;
`

const PanelBody = styled.div`
  display: flex;
  flex: 1;
  min-height: 0;
  margin: 1px 2px 0;
  border-top: 1px solid #000;
`

const LayerList = styled.div`
  flex: 1;
  border-bottom: 1px solid #000;
`

const Layer = styled.div`
  display: flex;
  height: 20px;
  border-bottom: 1px solid #999;
  background: #d6d6d6;

  &:last-child {
    border-bottom: 1px solid #000;
  }
`

const LayerFlags = styled.div`
  display: flex;
  align-items: center;
  gap: 4px;
  width: 45px;
  padding-left: 3px;
  border-right: 1px solid #000;
`

const EyeButton = styled.button`
  display: grid;
  place-items: center;
  width: 13px;
  height: 14px;
  border: 1px solid #f0f0f0;
  border-top-color: #bbb;
  border-left-color: #bbb;
`

const LockBox = styled.button`
  width: 13px;
  height: 14px;
  border: 1px solid #aaa;
  border-right-color: #fff;
  border-bottom-color: #fff;
`

const LayerColor = styled.span`
  width: 4px;
  height: 14px;
  background: #4f80ff;
`

const Expander = styled.button`
  display: grid;
  place-items: center;
  width: 15px;
`

const LayerName = styled.div`
  display: flex;
  align-items: center;
  flex: 1;
  gap: 3px;
  padding: ${(props) => (props.$top ? '0 1px 0 2px' : '0 1px 0 32px')};
  background: ${(props) => (props.$top ? '#0078d7' : '#fff')};
  color: ${(props) => (props.$top ? '#fff' : '#000')};
  font-weight: ${(props) => (props.$top ? 'bold' : 'normal')};
`

const LayerText = styled.span`
  flex: 1;
  margin-left: 1px;
`

const Thumb = styled.span`
  width: 16px;
  height: 16px;
  border: 1px solid #000;
  background: linear-gradient(#fff 5px, #bbb 5px 6px, #fff 6px 9px, #bbb 9px 10px, #fff 10px);
`

const Selected = styled.span`
  width: 8px;
  height: 8px;
  border: 1px solid ${(props) => (props.$top ? '#fff' : '#000')};
  background: #4f80ff;
`

const PanelScroll = styled.div`
  display: flex;
  flex-direction: column;
  justify-content: space-between;
  align-items: center;
  width: 16px;
  padding: 5px 0 3px;
  border-left: 1px solid #fff;
  background: #f0f0f0;

  svg {
    opacity: 0.35;
  }
`

const PanelFoot = styled.div`
  display: flex;
  align-items: center;
  justify-content: space-between;
  height: 17px;
  flex: none;
  padding: 0 27px 2px 11px;
`

const FootIcons = styled.div`
  display: flex;
  gap: 19px;
`

const DockColumn = styled.nav`
  flex: none;
  width: 36px;
  background: #646464;
`

const DockGroup = styled.div`
  display: flow-root;
  padding-bottom: 3px;
  background: #d6d6d6;
  border-left: 1px solid #eee;
  border-right: 1px solid #eee;
  border-bottom: 1px solid #666;
`

const DockButton = styled.button`
  display: grid;
  place-items: center;
  width: 100%;
  height: 30px;

  svg {
    filter: drop-shadow(1px 1px 0 rgba(0, 0, 0, 0.15));
  }
`

const Watermark = styled.div`
  position: absolute;
  right: 23px;
  bottom: 14px;
  width: 177px;
  height: 64px;
  padding-left: 20px;
  background: rgba(184, 184, 184, 0.68);
  font: 64px/62px Roboto, sans-serif;
  color: #fff;
`

export default App
